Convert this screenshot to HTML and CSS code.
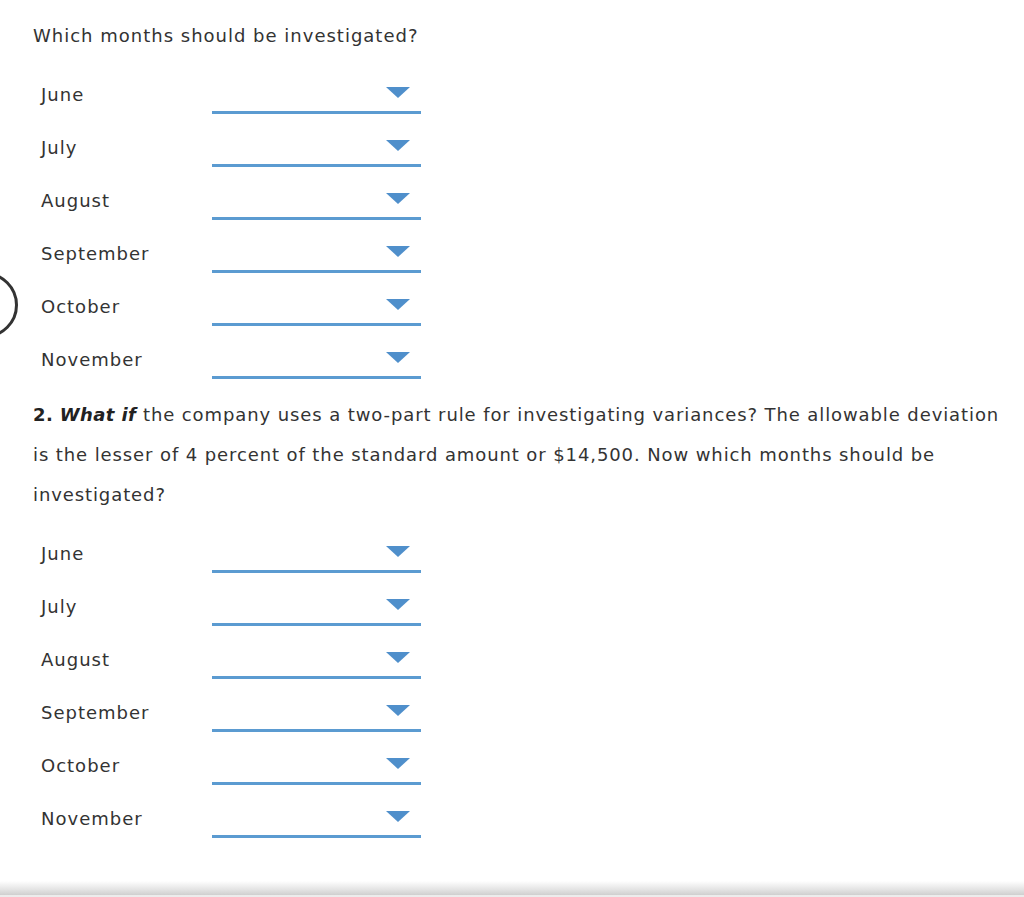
FILE: index.html
```html
<!DOCTYPE html>
<html>
<head>
<meta charset="utf-8">
<link rel="stylesheet" href="styles.css">
</head>
<body>
<div class="page">
  <span class="ring"></span>
  <p class="heading">Which months should be investigated?</p>
  <div class="rows">
    <div class="row"><span class="label">June</span><span class="dropdown"><span class="caret"></span></span></div>
    <div class="row"><span class="label">July</span><span class="dropdown"><span class="caret"></span></span></div>
    <div class="row"><span class="label">August</span><span class="dropdown"><span class="caret"></span></span></div>
    <div class="row"><span class="label">September</span><span class="dropdown"><span class="caret"></span></span></div>
    <div class="row"><span class="label">October</span><span class="dropdown"><span class="caret"></span></span></div>
    <div class="row"><span class="label">November</span><span class="dropdown"><span class="caret"></span></span></div>
  </div>
  <p class="question"><b>2. <i>What if</i></b> the company uses a two-part rule for investigating variances? The allowable deviation is the lesser of 4 percent of the standard amount or $14,500. Now which months should be investigated?</p>
  <div class="rows rows-second">
    <div class="row"><span class="label">June</span><span class="dropdown"><span class="caret"></span></span></div>
    <div class="row"><span class="label">July</span><span class="dropdown"><span class="caret"></span></span></div>
    <div class="row"><span class="label">August</span><span class="dropdown"><span class="caret"></span></span></div>
    <div class="row"><span class="label">September</span><span class="dropdown"><span class="caret"></span></span></div>
    <div class="row"><span class="label">October</span><span class="dropdown"><span class="caret"></span></span></div>
    <div class="row"><span class="label">November</span><span class="dropdown"><span class="caret"></span></span></div>
  </div>
  <div class="fade"></div>
</div>
</body>
</html>
```

FILE: styles.css
```css
html, body {
  margin: 0;
  padding: 0;
  background: #fff;
}

body {
  font-family: "DejaVu Sans", Verdana, sans-serif;
  font-size: 18px;
  letter-spacing: 1px;
  color: #333;
  overflow: hidden;
}

.page {
  position: relative;
  width: 1024px;
  height: 897px;
  display: flex;
  flex-direction: column;
}

.ring {
  position: absolute;
  left: -48px;
  top: 272px;
  width: 60px;
  height: 60px;
  border: 3px solid #333;
  border-radius: 50%;
}

.heading {
  margin: 0;
  padding: 24px 0 0 33px;
  line-height: 24px;
}

.rows {
  display: flex;
  flex-direction: column;
  margin-top: 20px;
  padding-left: 41px;
}

.rows-second {
  margin-top: 12px;
}

.row {
  height: 53px;
  display: flex;
  align-items: center;
}

.label {
  width: 171px;
  line-height: 24px;
}

.dropdown {
  width: 198px;
  height: 35px;
  border-bottom: 3px solid #5b9bd1;
  display: flex;
  align-items: center;
  justify-content: flex-end;
  padding-right: 11px;
}

.caret {
  width: 0;
  height: 0;
  border-left: 12px solid transparent;
  border-right: 12px solid transparent;
  border-top: 11px solid #4f8fcb;
  margin-top: -1px;
}

.question {
  margin: 9px 0 0 0;
  padding: 0 0 0 33px;
  width: 1016px;
  box-sizing: border-box;
  line-height: 40px;
  letter-spacing: 0.9px;
}

.question b {
  color: #222;
  letter-spacing: 0.4px;
}

.fade {
  margin-top: auto;
  height: 14px;
  background: linear-gradient(to bottom, #fff 0%, #e4e4e4 60%, #cfcfcf 100%);
  border-bottom: 2px solid #ececec;
}
```
